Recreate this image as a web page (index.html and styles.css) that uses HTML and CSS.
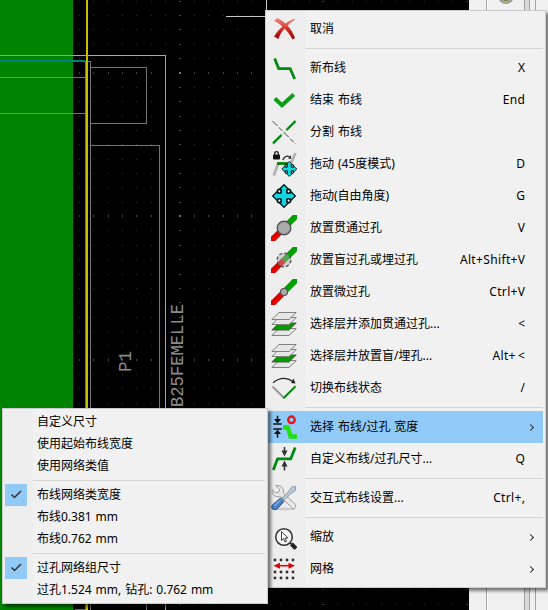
FILE: index.html
```html
<!DOCTYPE html>
<html lang="zh-CN">
<head>
<meta charset="utf-8">
<title>PCB</title>
<link rel="stylesheet" href="styles.css">
</head>
<body>
<div class="app">
  <svg class="board" width="469" height="610" shape-rendering="crispEdges">
    <rect width="469" height="610" fill="#000"/>
    <g id="grid"></g>
    <rect width="73" height="610" fill="#008400"/>
    <path d="M0 77.500H73M0 113.500H73" stroke="#6b8f6b" fill="none"/>
    <path d="M0 55.500H73" stroke="#78b478"/>
    <path d="M73 55.500H165.500V610" stroke="#a8a8a8" fill="none"/>
    <path d="M73 77.500H86M73 113.500H86M85.500 61V610M86 61.500H90.500V610M90 67.500H146.500V123.500H90M90 145.500H159.500V604M146.500 604V610M75 609.500H86" stroke="#747474" fill="none"/>
    <rect y="60" width="85" height="2" fill="#008080"/>
    <rect x="86" width="2" height="610" fill="#c2c200"/>
    <path d="M226 16.500H266M266.500 0V12" stroke="#c8c8c8"/>
    <g class="silk">
      <text transform="translate(131 372) rotate(-90)" textLength="21" lengthAdjust="spacingAndGlyphs">P1</text>
      <text transform="translate(183 407) rotate(-90)" textLength="103" lengthAdjust="spacingAndGlyphs">B25FEMELLE</text>
    </g>
  </svg>
  <div class="side">
    <div class="layers"><span class="swatch"></span></div>
    <div class="scroll"></div>
    <div class="gap"></div>
    <div class="edge"></div>
  </div>
</div>

<div class="menu main">
  <div class="item"><svg class="icon" viewBox="0 0 26 26"><defs><linearGradient id="r" x1="0" y1="0" x2="0" y2="1"><stop offset="0" stop-color="#f78a80"/><stop offset=".5" stop-color="#d03028"/><stop offset="1" stop-color="#980000"/></linearGradient></defs><path d="M3 4.500L6.500 2C11 4 14 7 16 9Q21 14 24 22L21.500 23.500Q17 15.500 13 12Q8 7 3 4.500Z" fill="url(#r)"/><path d="M24.500 3.500L22.500 2.800Q17 5 12.500 9.500Q6 15 3 20.500L7.500 23Q9 17 15 11Q19 6.500 24.500 3.500Z" fill="url(#r)"/></svg><span class="label">取消</span></div>
  <div class="sep"></div>
  <div class="item"><svg class="icon" viewBox="0 0 26 26"><path class="track" d="M3.700 3.500L7.700 13.700H19.200L23.700 24"/></svg><span class="label">新布线</span><span class="key">X</span></div>
  <div class="item"><svg class="icon" viewBox="0 0 26 26"><path d="M3.800 11.500L11 18.300L22.800 7.500" fill="none" stroke="#0c9e14" stroke-width="4"/></svg><span class="label">结束 布线</span><span class="key">End</span></div>
  <div class="item"><svg class="icon" viewBox="0 0 26 26"><path d="M1.500 2L24.500 25" stroke="#444" stroke-width="1" stroke-dasharray="7 2 5 2"/><path class="track thin" d="M2 24.400L10.500 16M15.500 11L24.500 2"/><path d="M10.500 16L15.500 11" stroke="#8cc88c"/></svg><span class="label">分割 布线</span></div>
  <div class="item"><svg class="icon" viewBox="0 0 26 26"><path d="M2.800 24.500L7 13M20 12L24.500 2" stroke="#b4b4b4" stroke-width="3"/><path d="M6 12.500H17" stroke="#008400" stroke-width="2.800"/><rect x="2" y="3.500" width="7" height="5" rx="1" fill="#111"/><path d="M3.700 4V2.500Q3.700 .7 5.500 .7Q7.300 .7 7.300 2.500V4" fill="none" stroke="#111" stroke-width="1.200"/><path d="M11.700 9Q14.500 3.500 18.500 6" fill="none" stroke="#222" stroke-width="1.300"/><path d="M17.200 7.700L20.300 7.700L19.600 4Z" fill="#222"/><g transform="translate(18.300 18) scale(.66)"><use href="#mv"/></g></svg><span class="label">拖动 (45度模式)</span><span class="key">D</span></div>
  <div class="item"><svg class="icon" viewBox="0 0 26 26"><defs><g id="mv"><path d="M0 -11.300L11.300 0L0 11.300L-11.300 0Z" fill="#10d8e0" stroke="#061c20" stroke-width="1.400" stroke-linejoin="round"/><path d="M-3 -7V-3H-7M3 -7V-3H7M-3 7V3H-7M3 7V3H7" fill="none" stroke="#061c20" stroke-width="1.200"/><g fill="#e8f4f4" stroke="#061c20" stroke-width="1.600"><circle cx="-4.700" cy="-4.700" r="1.900"/><circle cx="4.700" cy="-4.700" r="1.900"/><circle cx="-4.700" cy="4.700" r="1.900"/><circle cx="4.700" cy="4.700" r="1.900"/></g></g></defs><use href="#mv" x="13" y="13"/></svg><span class="label">拖动(自由角度)</span><span class="key">G</span></div>
  <div class="item"><svg class="icon" viewBox="0 0 26 26"><defs><g id="tr" stroke-width="6"><path d="M-1 27L13 13" stroke="#e00000"/><path d="M13 13L27 -1" stroke="#00a000"/></g></defs><use href="#tr"/><circle cx="13" cy="13" r="6.800" fill="#aaa" stroke="#555" stroke-width="1.400"/></svg><span class="label">放置贯通过孔</span><span class="key">V</span></div>
  <div class="item"><svg class="icon" viewBox="0 0 26 26"><use href="#tr"/><circle cx="13" cy="13" r="6.800" fill="#b0b0b0" fill-opacity=".45" stroke="#555" stroke-width="1.400" stroke-dasharray="3.500 1.850"/></svg><span class="label">放置盲过孔或埋过孔</span><span class="key">Alt+Shift+V</span></div>
  <div class="item"><svg class="icon" viewBox="0 0 26 26"><use href="#tr"/><circle cx="13" cy="13" r="3.500" fill="#aaa" stroke="#555" stroke-width="1.200"/></svg><span class="label">放置微过孔</span><span class="key">Ctrl+V</span></div>
  <div class="item"><svg class="icon" viewBox="0 0 26 26"><defs><g id="ly" fill="#e6e6e6" stroke="#808080"><path d="M8 17.500H25.300L18 24.500H.8Z"/><path d="M8 12H25.300L18 19H.8Z" fill="#009c00" stroke="#555"/><path d="M8 6.500H25.300L18 13.500H.8Z"/><path d="M8 1.500H25.300L18 8.500H.8Z"/></g></defs><use href="#ly"/></svg><span class="label">选择层并添加贯通过孔...</span><span class="key">&lt;</span></div>
  <div class="item"><svg class="icon" viewBox="0 0 26 26"><use href="#ly"/></svg><span class="label">选择层并放置盲/埋孔...</span><span class="key">Alt+&thinsp;&lt;</span></div>
  <div class="item"><svg class="icon" viewBox="0 0 26 26"><path d="M1.500 11.500L13 23" stroke="#999" stroke-width="2"/><path d="M12.500 23.300L24.500 11.300" stroke="#008a10" stroke-width="2"/><path d="M2 7.800Q12 -.2 22 6.500" fill="none" stroke="#222" stroke-width="1.300"/><path d="M20 8L24.500 8.500L22.500 3.500Z" fill="#222"/></svg><span class="label">切换布线状态</span><span class="key">/</span></div>
  <div class="sep"></div>
  <div class="item active"><svg class="icon" viewBox="0 0 26 26"><g stroke="#111" stroke-width="1.500"><path d="M2.300 10H10.800M2.300 15H10.800M6.500 1.700V7M6.500 18V23.700"/></g><path d="M3 5H10L6.500 9.500ZM3 20H10L6.500 15.500Z" fill="#111"/><circle cx="20.500" cy="5.800" r="3.300" fill="none" stroke="#e81414" stroke-width="2.300"/><path d="M12 13.300H16.800L19.500 22.500H26" fill="none" stroke="#22e010" stroke-width="4.300"/></svg><span class="label">选择 布线/过孔 宽度</span><i class="arrow"></i></div>
  <div class="item"><svg class="icon" viewBox="0 0 26 26"><path class="track" d="M2.300 24L6.500 12.900H19.700L24.200 1.500"/><path d="M13.500 1V6M13.500 20V24.500" stroke="#333" stroke-width="1.500"/><path d="M10.500 4.500H16.500L13.500 10.500ZM10.500 20.500H16.500L13.500 14.500Z" fill="#333"/></svg><span class="label">自定义布线/过孔尺寸...</span><span class="key">Q</span></div>
  <div class="sep"></div>
  <div class="item"><svg class="icon" viewBox="0 0 26 26"><ellipse cx="13" cy="24" rx="12" ry="1.500" fill="#ccc"/><path d="M4.500 .8Q10 -.5 12 4Q13 6 12.500 8L24.500 19.500Q25.500 23 22 24L9.500 11.500Q4 13 1.500 8.500Q.8 6.500 1.500 4.800L5 8L8 7L8.500 4Z" fill="#e6e6e6" stroke="#999" stroke-width=".9"/><path d="M24.500 1.500L21 1.800L17.500 6.500L11 13L13 15L19.500 9L24.500 5.500Z" fill="#b8c8d8" stroke="#8090a0" stroke-width=".8"/><path d="M9.500 13L13 16.500L6 24.300Q3 25.500 1.200 23.800Q0 21.800 1.500 19.800Z" fill="#4a7fc4" stroke="#2a558e" stroke-width=".9"/><path d="M9.500 15L3.500 21" stroke="#8cb4e6" stroke-width="1.200"/></svg><span class="label">交互式布线设置...</span><span class="key">Ctrl+,</span></div>
  <div class="sep"></div>
  <div class="item"><svg class="icon" viewBox="0 0 26 26"><circle cx="13" cy="13" r="8.300" fill="#f4f4f4" stroke="#333" stroke-width="1.500"/><path d="M19 18.800L20.500 20" stroke="#333" stroke-width="2"/><path d="M20.500 20L25 24.500" stroke="#222" stroke-width="4"/><path d="M10.500 7.500V16.500L12.500 14.500L14 18L15.500 17.300L14 14H17Z" fill="#fff" stroke="#444" stroke-width="1"/></svg><span class="label">缩放</span><i class="arrow"></i></div>
  <div class="item"><svg class="icon" viewBox="0 0 26 26"><g stroke="#333" stroke-width="2.900" stroke-linecap="round" stroke-dasharray="0 6"><path d="M4 4H23M4 16H23M4 22H23"/></g><path d="M7 9.700H20" stroke="#e00000" stroke-width="1.500"/><path d="M2.500 9.700L9 6.700V12.700ZM24 9.700L17.500 6.700V12.700Z" fill="#e00000"/></svg><span class="label">网格</span><i class="arrow"></i></div>
</div>

<div class="menu sub">
  <div class="item"><span class="label">自定义尺寸</span></div>
  <div class="item"><span class="label">使用起始布线宽度</span></div>
  <div class="item"><span class="label">使用网络类值</span></div>
  <div class="sep"></div>
  <div class="item"><span class="check"><svg viewBox="0 0 22 22"><path d="M6.500 10.500L9.500 13.500L16 7"/></svg></span><span class="label">布线网络类宽度</span></div>
  <div class="item"><span class="label">布线0.381 mm</span></div>
  <div class="item"><span class="label">布线0.762 mm</span></div>
  <div class="sep"></div>
  <div class="item"><span class="check"><svg viewBox="0 0 22 22"><path d="M6.500 10.500L9.500 13.500L16 7"/></svg></span><span class="label">过孔网络组尺寸</span></div>
  <div class="item"><span class="label">过孔1.524 mm, 钻孔: 0.762 mm</span></div>
</div>
<script src="grid.js"></script>
</body>
</html>
```
FILE: styles.css
```css
* { box-sizing: border-box; }
body { margin: 0; width: 548px; height: 610px; overflow: hidden; position: relative; background: #f0f0f0; font: 12px/16px "Noto Sans", "Noto Sans CJK SC", sans-serif; color: #000; }
.app { display: flex; width: 548px; height: 610px; }
.board { display: block; flex: none; }
.silk text { font: 19px "Liberation Mono", monospace; fill: #8c8c8c; }
.side { display: flex; flex: 1; }
.layers { width: 55px; display: flex; justify-content: flex-end; background: linear-gradient(90deg, #f0f0f0 17px, #a0a0a0 17px, #a0a0a0 18px, #fff 18px, #fff 19px, #f0f0f0 19px); }
.swatch { width: 16px; height: 16px; margin: -12px 10px 0 0; border: 2px solid #a0a0a0; border-radius: 50%; background: #84841c; box-shadow: inset 0 0 0 1px #b4b4b4; }
.scroll { width: 6px; background: #dadada; border: solid #a0a0a0; border-width: 0 1px; }
.gap { width: 5px; }
.edge { flex: 1; border-left: 1px solid #a0a0a0; }

.menu { position: absolute; background: #f0f0f0; border: 1px solid #ccc; padding: 2px; box-shadow: 3px 3px 3px rgba(0, 0, 0, .5); }
.main { left: 265px; top: 10px; width: 281px; height: 578px; background: linear-gradient(90deg, #eeeeee 40px, #f1f1f1 40px); }
.sub { left: 2px; top: 408px; width: 266px; height: 196px; background: linear-gradient(90deg, #eeeeee 30px, #f1f1f1 30px); }
.item { display: flex; align-items: center; height: 32px; padding: 0 18px 0 3px; white-space: pre; }
.icon { width: 26px; height: 26px; flex: none; margin-right: 13px; }
.label { word-spacing: .8px; }
.key { margin-left: auto; margin-right: -.35px; letter-spacing: .35px; }
.active { background: #91c9f7; }
.sep { height: 7px; padding-top: 3px; margin-left: 38px; }
.sep::before { content: ""; display: block; height: 1px; background: #d4d4d4; }
.arrow { margin-left: auto; margin-right: -8px; width: 5px; height: 5px; border: solid #333; border-width: 1.2px 1.2px 0 0; transform: rotate(45deg); }
.track { fill: none; stroke: #008a10; stroke-width: 2.8; }
.thin { stroke-width: 2.4; }
.sub .item { height: 22px; padding: 0; }
.sub .label { margin-left: 32px; }
.sub .check + .label { margin-left: 10px; }
.sub .sep { margin-left: 28px; }
.check { width: 22px; height: 22px; background: #91c9f7; }
.check svg { display: block; fill: none; stroke: #333; stroke-width: 1.5; }
```
FILE: grid.js
```js
const grid = document.getElementById("grid");
const step = 14.36;
for (let i = -8; i < 21; i++) {
  for (let j = -5; j < 38; j++) {
    const mx = i % 10 === 0, my = j % 10 === 0;
    const r = document.createElementNS("http://www.w3.org/2000/svg", "rect");
    r.setAttribute("x", Math.floor(180 + i * step) - (mx ? 1 : 0));
    r.setAttribute("y", Math.floor(73 + j * step) - (my ? 1 : 0));
    r.setAttribute("width", mx ? 2 : 1);
    r.setAttribute("height", my ? 2 : 1);
    r.setAttribute("fill", mx && my ? "#707070" : mx || my ? "#444" : "#303030");
    grid.appendChild(r);
  }
}
```
